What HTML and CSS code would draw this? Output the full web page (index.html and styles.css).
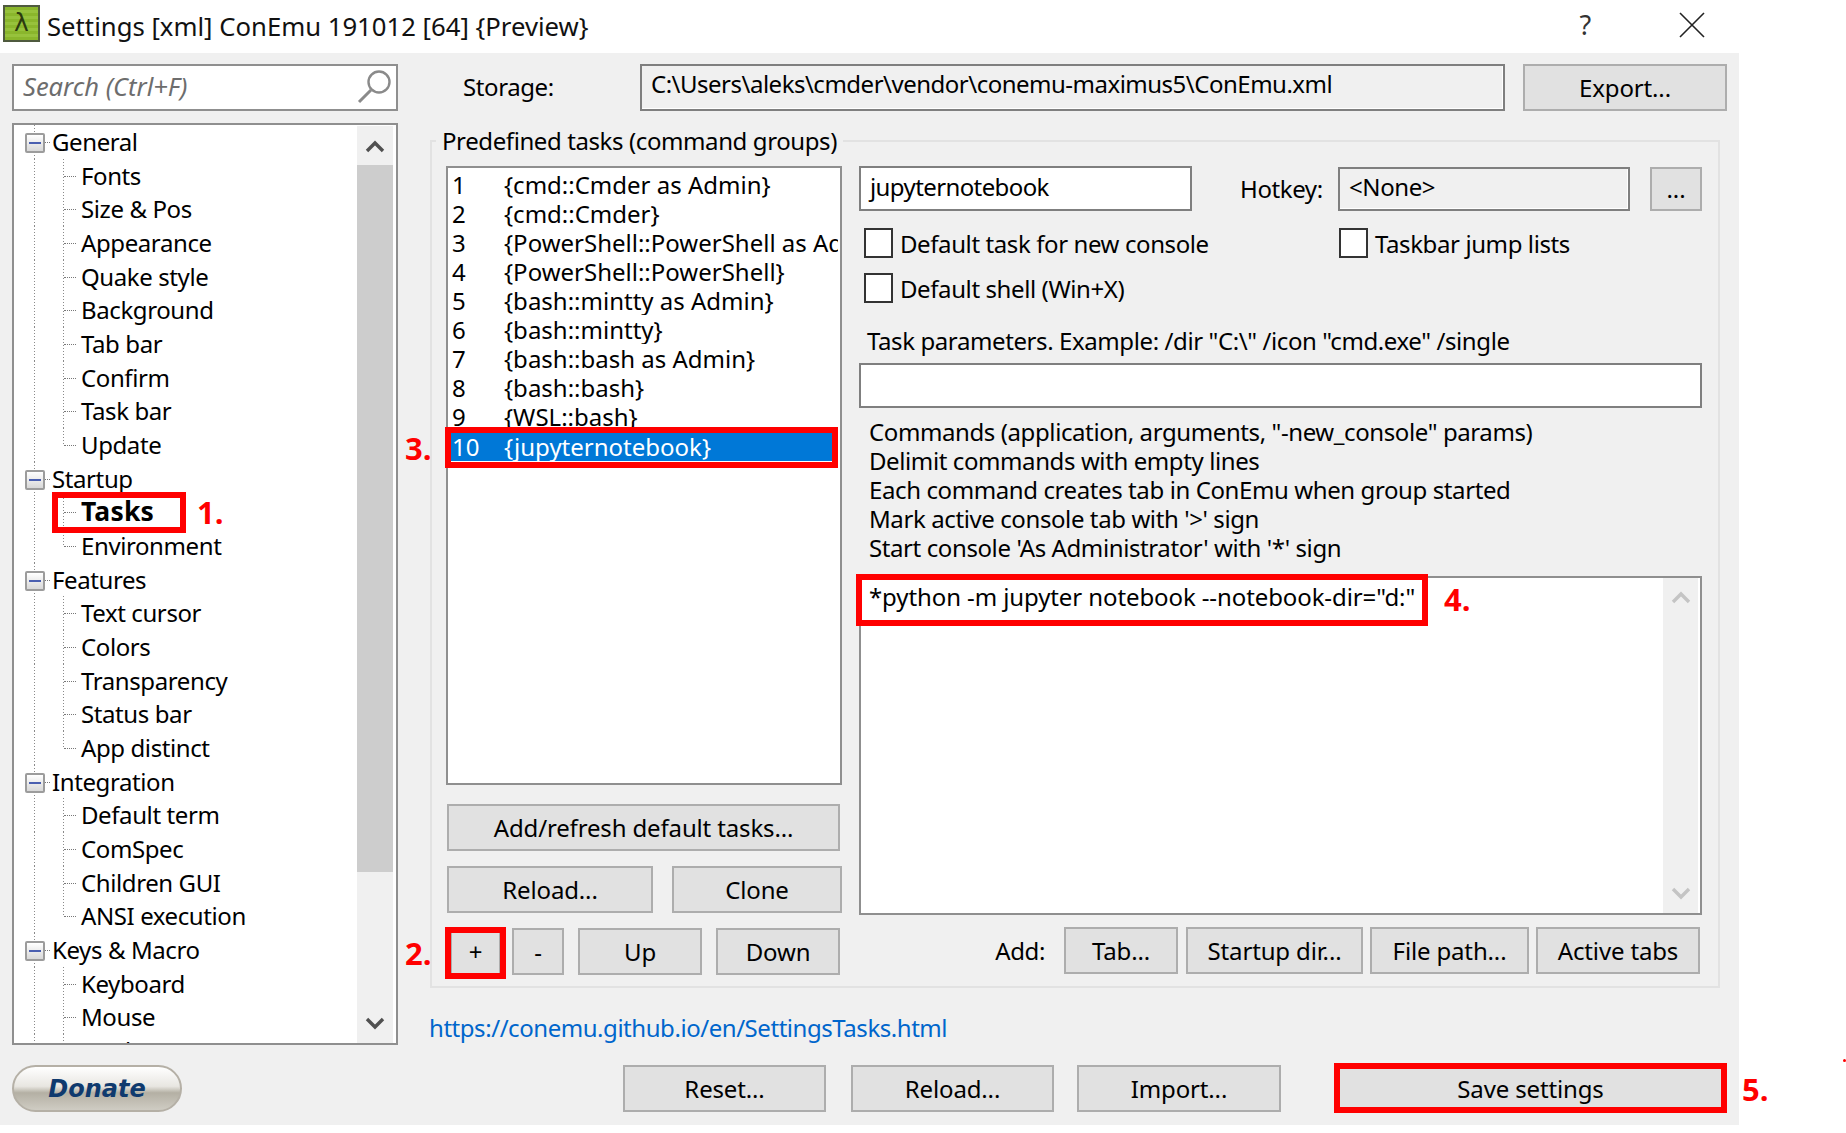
FILE: index.html
```html
<!DOCTYPE html>
<html lang="en">
<head>
<meta charset="utf-8">
<title>Settings</title>
<link rel="stylesheet" href="styles.css">
</head>
<body>
<div class="titlebar">
  <span class="logo">λ</span>
  <span class="title">Settings [xml] ConEmu 191012 [64] {Preview}</span>
  <span class="help">?</span>
  <svg class="close" width="26" height="26" viewBox="0 0 26 26"><path d="M1 1L25 25M25 1L1 25" stroke="#222" stroke-width="1.6" fill="none"/></svg>
</div>
<div class="dialog">
  <aside class="side">
    <div class="search">
      <span class="search-text">Search (Ctrl+F)</span>
      <svg width="36" height="38" viewBox="0 0 36 38"><circle cx="22" cy="13" r="10.5" fill="none" stroke="#8a8a8a" stroke-width="2.4"/><path d="M14 21L2 33" stroke="#8a8a8a" stroke-width="3" fill="none"/></svg>
    </div>
    <div class="tree">
      <div class="tree-rows">
        <div class="node"><span class="exp"></span>General</div>
        <div class="leaf">Fonts</div>
        <div class="leaf">Size &amp; Pos</div>
        <div class="leaf">Appearance</div>
        <div class="leaf">Quake style</div>
        <div class="leaf">Background</div>
        <div class="leaf">Tab bar</div>
        <div class="leaf">Confirm</div>
        <div class="leaf">Task bar</div>
        <div class="leaf last">Update</div>
        <div class="node"><span class="exp"></span>Startup</div>
        <div class="leaf strong">Tasks</div>
        <div class="leaf last">Environment</div>
        <div class="node"><span class="exp"></span>Features</div>
        <div class="leaf">Text cursor</div>
        <div class="leaf">Colors</div>
        <div class="leaf">Transparency</div>
        <div class="leaf">Status bar</div>
        <div class="leaf last">App distinct</div>
        <div class="node"><span class="exp"></span>Integration</div>
        <div class="leaf">Default term</div>
        <div class="leaf">ComSpec</div>
        <div class="leaf">Children GUI</div>
        <div class="leaf last">ANSI execution</div>
        <div class="node"><span class="exp"></span>Keys &amp; Macro</div>
        <div class="leaf">Keyboard</div>
        <div class="leaf">Mouse</div>
        <div class="leaf">Mark/Copy</div>
      </div>
      <div class="scroll">
        <div class="scroll-btn"><svg width="20" height="14" viewBox="0 0 20 14"><path d="M2 12L10 4L18 12" fill="none" stroke="#505050" stroke-width="3.4"/></svg></div>
        <div class="thumb"></div>
        <div class="scroll-btn"><svg width="20" height="14" viewBox="0 0 20 14"><path d="M2 2L10 10L18 2" fill="none" stroke="#505050" stroke-width="3.4"/></svg></div>
      </div>
    </div>
  </aside>
  <main class="pane">
    <div class="storage">
      <span class="storage-label">Storage:</span>
      <div class="field readonly storage-field">C:\Users\aleks\cmder\vendor\conemu-maximus5\ConEmu.xml</div>
      <button class="btn export">Export...</button>
    </div>
    <section class="group">
      <span class="legend">Predefined tasks (command groups)</span>
      <div class="group-left">
        <div class="list">
          <div class="item"><span class="num">1</span>{cmd::Cmder as Admin}</div>
          <div class="item"><span class="num">2</span>{cmd::Cmder}</div>
          <div class="item"><span class="num">3</span>{PowerShell::PowerShell as Admin}</div>
          <div class="item"><span class="num">4</span>{PowerShell::PowerShell}</div>
          <div class="item"><span class="num">5</span>{bash::mintty as Admin}</div>
          <div class="item"><span class="num">6</span>{bash::mintty}</div>
          <div class="item"><span class="num">7</span>{bash::bash as Admin}</div>
          <div class="item"><span class="num">8</span>{bash::bash}</div>
          <div class="item"><span class="num">9</span>{WSL::bash}</div>
          <div class="item selected"><span class="num">10</span>{jupyternotebook}</div>
        </div>
        <button class="btn refresh">Add/refresh default tasks...</button>
        <div class="btn-row">
          <button class="btn w-reload">Reload...</button>
          <button class="btn w-clone">Clone</button>
        </div>
        <div class="btn-row">
          <button class="btn w-plus">+</button>
          <button class="btn w-minus">-</button>
          <button class="btn w-up">Up</button>
          <button class="btn w-down">Down</button>
        </div>
      </div>
      <div class="group-right">
        <div class="name-row">
          <div class="field name-field">jupyternotebook</div>
          <span class="hotkey-label">Hotkey:</span>
          <div class="field readonly hotkey-field">&lt;None&gt;</div>
          <button class="btn dots">...</button>
        </div>
        <div class="checks">
          <label class="check"><span class="box"></span>Default task for new console</label>
          <label class="check"><span class="box"></span>Taskbar jump lists</label>
          <label class="check"><span class="box"></span>Default shell (Win+X)</label>
        </div>
        <div class="params-label">Task parameters. Example: /dir "C:\" /icon "cmd.exe" /single</div>
        <div class="field params-field"></div>
        <div class="notes">
          <div>Commands (application, arguments, "-new_console" params)</div>
          <div>Delimit commands with empty lines</div>
          <div>Each command creates tab in ConEmu when group started</div>
          <div>Mark active console tab with '&gt;' sign</div>
          <div>Start console 'As Administrator' with '*' sign</div>
        </div>
        <div class="editor">
          <div class="editor-text">*python -m jupyter notebook --notebook-dir="d:"</div>
          <div class="editor-scroll">
            <svg width="20" height="14" viewBox="0 0 20 14"><path d="M2 12L10 4L18 12" fill="none" stroke="#c4c4c4" stroke-width="3.4"/></svg>
            <svg width="20" height="14" viewBox="0 0 20 14"><path d="M2 2L10 10L18 2" fill="none" stroke="#c4c4c4" stroke-width="3.4"/></svg>
          </div>
        </div>
        <div class="add-row">
          <span class="add-label">Add:</span>
          <button class="btn w-tab">Tab...</button>
          <button class="btn w-startup">Startup dir...</button>
          <button class="btn w-file">File path...</button>
          <button class="btn w-active">Active tabs</button>
        </div>
      </div>
    </section>
    <a class="link" href="#">https://conemu.github.io/en/SettingsTasks.html</a>
  </main>
  <footer class="footer">
    <div class="donate">Donate</div>
    <button class="btn w-foot reset">Reset...</button>
    <button class="btn w-foot reload2">Reload...</button>
    <button class="btn w-foot import">Import...</button>
    <button class="btn save">Save settings</button>
  </footer>
</div>
<div class="mark m1"></div><span class="num-mark n1">1.</span>
<div class="mark m2"></div><span class="num-mark n2">2.</span>
<div class="mark m3"></div><span class="num-mark n3">3.</span>
<div class="mark m4"></div><span class="num-mark n4">4.</span>
<div class="mark m5"></div><span class="num-mark n5">5.</span>
<span class="stray"></span>
</body>
</html>
```
FILE: styles.css
```css
* { box-sizing: border-box; }
html, body { margin: 0; height: 1133px; overflow: hidden; background: #fff; }
body { position: relative; font-family: "Noto Sans", "Open Sans", sans-serif; font-size: 24px; letter-spacing: -0.4px; color: #000; }

.titlebar { height: 53px; display: flex; align-items: center; position: relative; letter-spacing: 0; }
.logo { width: 37px; height: 37px; margin: -6px 0 0 3px; background: repeating-linear-gradient(#8ab62c 0 3px, #97c23c 3px 6px); border: 2px solid #4f5a3f; color: #2c3a10; font-family: "DejaVu Sans", sans-serif; font-size: 25px; line-height: 32px; text-align: center; }
.title { margin: 0 0 0 7px; font-size: 25.7px; color: #111; white-space: nowrap; }
.help { margin: -4px 0 0 991px; font-size: 27px; color: #333; }
.close { margin: -3px 0 0 88px; }

.dialog { width: 1739px; height: 1072px; background: #f0f0f0; padding: 11px 12px 13px; display: grid; grid-template-columns: 386px 1297px; column-gap: 32px; grid-template-rows: 981px 47px; row-gap: 20px; }

.side { display: flex; flex-direction: column; gap: 12px; }
.search { height: 47px; background: #fff; border: 2px solid #8f8f8f; display: flex; align-items: center; justify-content: space-between; padding: 0 3px 0 9px; }
.search-text { font-style: italic; color: #6d6d6d; font-size: 25.5px; letter-spacing: 0; margin-top: -4px; }

.tree { height: 922px; background: #fff; border: 2px solid #8f8f8f; display: flex; overflow: hidden; }
.tree-rows { flex: 1; overflow: hidden; }
.node, .leaf { height: 33.68px; line-height: 33.68px; white-space: nowrap; position: relative; }
.node { padding-left: 38px; background: linear-gradient(#8a8a8a 50%, transparent 50%) 20px 0 / 1px 3px repeat-y; }
.node::after { content: ""; position: absolute; left: 30px; top: 17px; width: 6px; border-top: 1px dotted #777; }
.leaf { padding-left: 67px; background: linear-gradient(#8a8a8a 50%, transparent 50%) 20px 0 / 1px 3px repeat-y, linear-gradient(#8a8a8a 50%, transparent 50%) 49px 0 / 1px 3px repeat-y; }
.leaf::before { content: ""; position: absolute; left: 50px; top: 17px; width: 12px; border-top: 1px dotted #777; }
.leaf.last::after { content: ""; position: absolute; left: 49px; top: 18px; width: 1px; height: 16px; background: #fff; }
.strong { font-weight: 700; font-size: 26.5px; letter-spacing: 0.2px; }
.exp { position: absolute; left: 11px; top: 8px; width: 20px; height: 20px; background: linear-gradient(#fff, #d8d8d8); border: 2px solid #9c9c9c; border-radius: 2px; z-index: 1; }
.exp::after { content: ""; position: absolute; left: 2px; right: 2px; top: 7px; height: 2px; background: #4a5fb0; }

.scroll { width: 36px; margin-right: 3px; background: #f0f0f0; display: flex; flex-direction: column; margin-top: 1px; }
.scroll-btn { height: 39px; display: flex; align-items: center; justify-content: center; }
.thumb { height: 707px; background: #cdcdcd; margin-bottom: auto; }

.pane { display: flex; flex-direction: column; }
.storage { height: 47px; display: flex; align-items: center; }
.storage-label { width: 210px; padding-left: 33px; margin-top: -2px; }
.field { border: 2px solid #7f7f7f; background: #fff; padding-left: 9px; display: flex; align-items: center; white-space: nowrap; overflow: hidden; }
.readonly { background: #f0f0f0; box-shadow: inset -1px -1px 0 #fff; }
.storage-field { width: 865px; height: 47px; align-items: flex-start; padding-top: 1px; letter-spacing: -0.5px; }

.btn { font: inherit; letter-spacing: -0.15px; color: #000; background: #e1e1e1; border: 2px solid #adadad; padding: 0; height: 47px; border-radius: 0; }
.export { width: 204px; margin-left: 18px; }

.group { position: relative; margin-top: 29px; width: 1290px; height: 848px; border: 2px solid #e2e2e2; padding: 24px 16px 0 14px; display: flex; gap: 17px; }
.legend { position: absolute; left: 4px; top: -16px; background: #f0f0f0; padding: 0 6px; line-height: 30px; white-space: nowrap; }

.group-left { width: 396px; display: flex; flex-direction: column; }
.list { height: 619px; background: #fff; border: 2px solid #8f8f8f; padding: 2px 2px 0 3px; overflow: hidden; letter-spacing: 0; }
.item { height: 29px; line-height: 29px; white-space: nowrap; overflow: hidden; }
.num { display: inline-block; width: 53px; padding-left: 1px; }
.selected { background: #0078d7; color: #fff; margin-top: 1px; }
.refresh { width: 393px; margin: 19px 0 0 1px; }
.btn-row { display: flex; margin: 15px 0 0 1px; }
.w-reload { width: 206px; }
.w-clone { width: 170px; margin-left: 19px; }
.w-plus { width: 51px; margin-left: 3px; }
.w-minus { width: 52px; margin-left: 11px; }
.w-up { width: 124px; margin-left: 14px; }
.w-down { width: 124px; margin-left: 14px; }

.group-right { width: 843px; display: flex; flex-direction: column; }
.name-row { height: 45px; display: flex; align-items: center; }
.name-field { width: 333px; height: 45px; padding-bottom: 4px; letter-spacing: -0.6px; }
.hotkey-label { width: 98px; margin-left: 48px; }
.hotkey-field { width: 292px; height: 44px; padding: 0 0 4px 9px; }
.dots { width: 52px; height: 44px; margin-left: 20px; }
.checks { display: grid; grid-template-columns: 475px 1fr; row-gap: 15px; margin-top: 17px; padding-left: 5px; }
.check { height: 30px; display: flex; align-items: center; gap: 7px; white-space: nowrap; }
.box { width: 29px; height: 30px; background: #fff; border: 2px solid #333; }
.params-label { height: 30px; line-height: 30px; margin-top: 23px; padding-left: 8px; white-space: nowrap; }
.params-field { height: 45px; margin-top: 7px; }
.notes { margin-top: 9px; padding-left: 10px; line-height: 29px; white-space: nowrap; }
.editor { height: 339px; margin-top: 14px; background: #fff; border: 2px solid #8f8f8f; display: flex; }
.editor-text { flex: 1; padding: 4px 0 0 8px; line-height: 30px; white-space: nowrap; letter-spacing: -0.1px; }
.editor-scroll { width: 35px; margin: 0 2px 0 0; background: #f0f0f0; display: flex; flex-direction: column; justify-content: space-between; align-items: center; padding: 12px 0; }
.add-row { display: flex; align-items: center; margin-top: 12px; justify-content: flex-end; padding-right: 2px; }
.add-label { margin-right: 19px; }
.w-tab { width: 114px; }
.w-startup { width: 177px; margin-left: 8px; }
.w-file { width: 159px; margin-left: 7px; }
.w-active { width: 164px; margin-left: 7px; }

.link { margin: 25px 0 0 -1px; line-height: 30px; color: #0066cc; text-decoration: none; white-space: nowrap; letter-spacing: -0.45px; }

.footer { grid-column: 1 / 3; display: flex; align-items: stretch; }
.donate { width: 170px; border-radius: 24px; border: 2px solid #b5b0a6; background: linear-gradient(#ffffff 0%, #e8e6e1 45%, #b4b0a4 60%, #cfccc3 100%); color: #0f3a6e; font-family: "DejaVu Sans", sans-serif; font-weight: 700; font-style: italic; font-size: 24px; letter-spacing: 0; display: flex; align-items: center; justify-content: center; }
.w-foot { width: 203px; height: 47px; }
.reset { margin-left: 441px; }
.reload2 { margin-left: 25px; }
.import { margin-left: 23px; width: 204px; }
.save { width: 385px; margin-left: 57px; }

.mark { position: absolute; border: 6px solid #ff0000; pointer-events: none; }
.m1 { left: 52px; top: 492px; width: 134px; height: 41px; }
.m2 { left: 445px; top: 927px; width: 61px; height: 52px; }
.m3 { left: 445px; top: 427px; width: 393px; height: 41px; }
.m4 { left: 856px; top: 574px; width: 572px; height: 52px; }
.m5 { left: 1334px; top: 1063px; width: 393px; height: 50px; }
.num-mark { position: absolute; color: #ff0000; font-family: "Open Sans", sans-serif; font-weight: 700; font-size: 31px; line-height: 36px; letter-spacing: 0; }
.n1 { left: 197px; top: 494px; }
.n2 { left: 405px; top: 935px; }
.n3 { left: 405px; top: 430px; }
.n4 { left: 1444px; top: 581px; }
.n5 { left: 1742px; top: 1071px; }
.stray { position: absolute; left: 1843px; top: 1059px; width: 3px; height: 3px; background: #ff0000; border-radius: 50%; }
```
